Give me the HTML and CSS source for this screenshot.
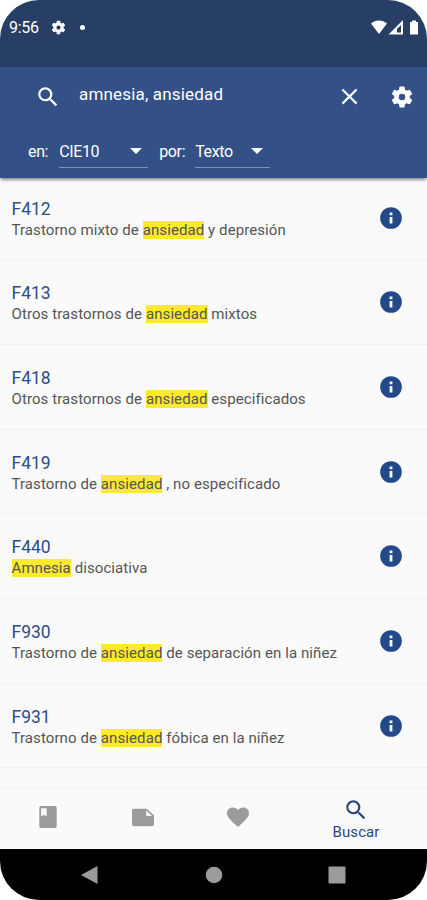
FILE: index.html
```html
<!DOCTYPE html>
<html lang="es">
<head>
    <meta charset="utf-8">
    <title>Buscar - CIE10</title>
    <link rel="stylesheet" href="styles.css">
</head>
<body>
    <svg class="sprite">
        <symbol id="search" viewBox="0 0 24 24"><path d="M15.5 14h-.79l-.28-.27A6.47 6.47 0 0 0 16 9.5 6.5 6.5 0 1 0 9.5 16c1.61 0 3.09-.59 4.23-1.57l.27.28v.79l5 4.99L20.49 19l-4.99-5zm-6 0C7.01 14 5 11.99 5 9.5S7.01 5 9.5 5 14 7.01 14 9.5 11.99 14 9.5 14z"/></symbol>
        <symbol id="gear" viewBox="0 0 24 24"><path d="M19.14 12.94c.04-.3.06-.61.06-.94 0-.32-.02-.64-.07-.94l2.03-1.58a.49.49 0 0 0 .12-.61l-1.92-3.32a.49.49 0 0 0-.59-.22l-2.39.96a7 7 0 0 0-1.62-.94l-.36-2.54a.48.48 0 0 0-.48-.41h-3.84a.47.47 0 0 0-.47.41l-.36 2.54c-.59.24-1.13.57-1.62.94l-2.39-.96a.48.48 0 0 0-.59.22L2.74 8.87a.48.48 0 0 0 .12.61l2.03 1.58c-.05.3-.09.63-.09.94s.02.64.07.94l-2.03 1.58a.49.49 0 0 0-.12.61l1.92 3.32c.12.22.37.29.59.22l2.39-.96c.5.38 1.03.7 1.62.94l.36 2.54c.05.24.24.41.48.41h3.84c.24 0 .44-.17.47-.41l.36-2.54c.59-.24 1.13-.56 1.62-.94l2.39.96c.22.08.47 0 .59-.22l1.92-3.32a.48.48 0 0 0-.12-.61l-2.01-1.58zM12 15a3 3 0 1 1 0-6 3 3 0 0 1 0 6z"/></symbol>
        <symbol id="info" viewBox="0 0 24 24"><path d="M12 2a10 10 0 1 0 0 20 10 10 0 0 0 0-20zm1.3 15h-2.6v-6h2.6v6zm0-7.6h-2.6V7h2.6v2.4z"/></symbol>
    </svg>

    <div class="phone">
        <div class="status-bar">
            <span class="time">9:56</span>
            <svg class="status-gear"><use href="#gear"/></svg>
            <span class="dot"></span>
            <svg class="signals" viewBox="0 0 50 16">
                <path d="M0 3.6C4.5-.4 11.5-.4 16 3.6L8 14z"/>
                <path fill-rule="evenodd" d="M17.5 14.5L32 0v14.5zM26 12.5h4V5l-4 4z"/>
                <path d="M39 2h2V.5h4V2h2v12.5h-8z"/>
            </svg>
        </div>

        <header class="app-bar">
            <div class="search-row">
                <svg class="search-icon"><use href="#search"/></svg>
                <span class="query">amnesia, ansiedad</span>
                <svg class="close-icon" viewBox="0 0 24 24"><path d="M19 6.41L17.59 5 12 10.59 6.41 5 5 6.41 10.59 12 5 17.59 6.41 19 12 13.41 17.59 19 19 17.59 13.41 12z"/></svg>
                <svg class="settings-icon"><use href="#gear"/></svg>
            </div>
            <div class="filters">
                <span class="filter-label">en:</span>
                <div class="select select-source">CIE10<i class="arrow"></i></div>
                <span class="filter-label">por:</span>
                <div class="select select-field">Texto<i class="arrow"></i></div>
            </div>
        </header>

        <main class="results">
            <div class="result">
                <div><h2>F412</h2><p>Trastorno mixto de <mark>ansiedad</mark> y depresión</p></div>
                <svg class="info"><use href="#info"/></svg>
            </div>
            <div class="result">
                <div><h2>F413</h2><p>Otros trastornos de <mark>ansiedad</mark> mixtos</p></div>
                <svg class="info"><use href="#info"/></svg>
            </div>
            <div class="result">
                <div><h2>F418</h2><p>Otros trastornos de <mark>ansiedad</mark> especificados</p></div>
                <svg class="info"><use href="#info"/></svg>
            </div>
            <div class="result">
                <div><h2>F419</h2><p>Trastorno de <mark>ansiedad</mark> , no especificado</p></div>
                <svg class="info"><use href="#info"/></svg>
            </div>
            <div class="result">
                <div><h2>F440</h2><p><mark>Amnesia</mark> disociativa</p></div>
                <svg class="info"><use href="#info"/></svg>
            </div>
            <div class="result">
                <div><h2>F930</h2><p>Trastorno de <mark>ansiedad</mark> de separación en la niñez</p></div>
                <svg class="info"><use href="#info"/></svg>
            </div>
            <div class="result">
                <div><h2>F931</h2><p>Trastorno de <mark>ansiedad</mark> fóbica en la niñez</p></div>
                <svg class="info"><use href="#info"/></svg>
            </div>
        </main>

        <nav class="tabs">
            <div class="tab">
                <svg viewBox="0 0 24 24"><path fill-rule="evenodd" d="M4.500 0h15q2 0 2 2v20q0 2-2 2h-15q-2 0-2-2V2q0-2 2-2zm0 2.500v9l3-2 3 2v-9z"/></svg>
            </div>
            <div class="tab">
                <svg viewBox="0 0 24 24"><path fill-rule="evenodd" d="M2 3h14l8 7v10q0 2-2 2H2q-2 0-2-2V5q0-2 2-2zm13.500 2v6H22z"/></svg>
            </div>
            <div class="tab">
                <svg viewBox="0 0 24 24"><path d="M12 23l-1.700-1.600C4 15.600 0 12 0 7.600 0 4 2.800 1.500 6.300 1.500c2.200 0 4.400 1 5.700 2.900 1.300-1.900 3.500-2.900 5.700-2.900C21.200 1.500 24 4 24 7.600c0 4.400-4 8-10.300 13.800z"/></svg>
            </div>
            <div class="tab active">
                <svg><use href="#search"/></svg>
                <span>Buscar</span>
            </div>
        </nav>

        <div class="system-nav">
            <svg viewBox="0 0 18 18"><path d="M0 9L16.500 0v18z"/></svg>
            <svg viewBox="0 0 18 18"><circle cx="9" cy="9" r="8.300"/></svg>
            <svg viewBox="0 0 18 18"><rect x=".5" y=".5" width="17" height="17" rx="1"/></svg>
        </div>
    </div>
</body>
</html>
```
FILE: styles.css
```css
* {
    box-sizing: border-box;
}
body {
    margin: 0;
    background: #fff;
    font-family: Roboto, sans-serif;
}
svg {
    display: block;
    flex: none;
    fill: currentColor;
}
.sprite {
    position: absolute;
    width: 0;
    height: 0;
}
.phone {
    display: flex;
    flex-direction: column;
    width: 427px;
    height: 900px;
    border-radius: 39px;
    overflow: hidden;
    background: #fafafa;
}
.status-bar {
    display: flex;
    align-items: center;
    height: 67px;
    padding: 0 6px 12px 9px;
    background: #273f64;
    color: #fff;
}
.time {
    width: 41px;
    font-size: 16px;
    letter-spacing: -0.3px;
}
.status-gear {
    width: 17px;
    height: 17px;
}
.dot {
    width: 5px;
    height: 5px;
    margin-left: 13px;
    border-radius: 50%;
    background: #fff;
}
.signals {
    width: 50px;
    height: 16px;
    margin-left: auto;
}
.app-bar {
    position: relative;
    flex: none;
    height: 111px;
    background: #335186;
    color: #fff;
    box-shadow: 0 3px 3px -1px rgba(0, 0, 0, 0.45);
}
.search-row {
    display: flex;
    align-items: center;
    height: 59px;
    padding: 0 12px 0 35px;
}
.search-icon {
    width: 26px;
    height: 26px;
}
.query {
    flex: 1;
    margin-left: 18px;
    padding-bottom: 5px;
    font-size: 17px;
    letter-spacing: 0.17px;
}
.close-icon {
    width: 27px;
    height: 27px;
    margin-right: 26px;
}
.settings-icon {
    width: 26px;
    height: 26px;
}
.filters {
    display: flex;
    align-items: center;
    height: 52px;
    padding: 0 0 1px 28px;
    font-size: 16px;
    letter-spacing: -0.35px;
}
.select {
    display: flex;
    align-items: center;
    justify-content: space-between;
    height: 32px;
    margin: 0 11px;
    border-bottom: 1px solid #7c91b5;
}
.select-source {
    width: 89px;
    padding-right: 6px;
}
.select-field {
    width: 75px;
    margin-left: 10px;
    padding-right: 7px;
}
.arrow {
    border: 6px solid transparent;
    border-top-color: #fff;
    border-bottom: 0;
}
.results {
    flex: 1;
    margin-top: -2.3px;
}
.result {
    display: flex;
    justify-content: space-between;
    height: 84.67px;
    padding: 23px 23.5px 0 11.5px;
    border-bottom: 1px solid #f0f0f0;
}
.result h2 {
    margin: 0;
    color: #2f4c84;
    font-size: 17.5px;
    font-weight: 400;
    line-height: 21px;
}
.result p {
    margin: 0;
    color: #555;
    font-size: 15px;
    letter-spacing: 0.09px;
    line-height: 21px;
}
mark {
    background: #fde92e;
    color: #555;
}
.info {
    width: 26px;
    height: 26px;
    margin-top: 6px;
    color: #23498a;
}
.tabs {
    display: flex;
    height: 62px;
    border-top: 1px solid #f0f0f0;
    background: #fafafa;
    color: #9b9b9b;
}
.tab {
    display: flex;
    flex: 0 0 95px;
    flex-direction: column;
    align-items: center;
    justify-content: center;
    padding-bottom: 4px;
}
.tab svg {
    width: 22px;
    height: 22px;
}
.tab.active {
    flex-basis: 142px;
    padding-bottom: 0;
    color: #2b4780;
}
.tab.active svg {
    width: 26px;
    height: 26px;
}
.tab.active span {
    font-size: 15px;
    letter-spacing: 0.1px;
    line-height: 18px;
}
.system-nav {
    display: flex;
    align-items: center;
    justify-content: space-between;
    height: 51px;
    padding: 0 81px;
    background: #000;
    color: #9b9b9b;
}
.system-nav svg {
    width: 18px;
    height: 18px;
}
```
